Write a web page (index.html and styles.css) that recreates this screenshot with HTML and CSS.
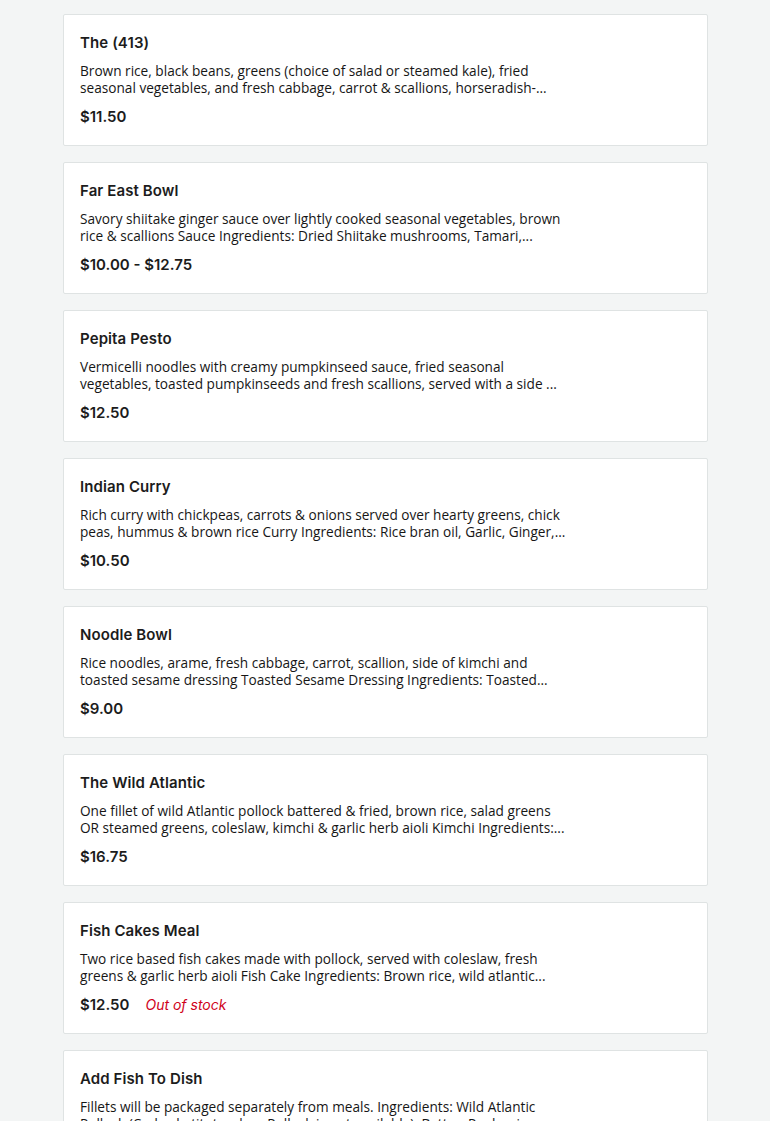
FILE: index.html
```
<!DOCTYPE html>
<html>
<head>
<meta charset="utf-8">
<link rel="stylesheet" href="styles.css">
</head>
<body>
<main class="menu">
  <article class="card">
    <h3 class="title">The (413)</h3>
    <p class="desc">Brown rice, black beans, greens (choice of salad or steamed kale), fried<br>seasonal vegetables, and fresh cabbage, carrot &amp; scallions, horseradish-...</p>
    <div class="meta"><span class="price">$11.50</span></div>
  </article>
  <article class="card">
    <h3 class="title">Far East Bowl</h3>
    <p class="desc">Savory shiitake ginger sauce over lightly cooked seasonal vegetables, brown<br>rice &amp; scallions Sauce Ingredients: Dried Shiitake mushrooms, Tamari,...</p>
    <div class="meta"><span class="price">$10.00 - $12.75</span></div>
  </article>
  <article class="card">
    <h3 class="title">Pepita Pesto</h3>
    <p class="desc">Vermicelli noodles with creamy pumpkinseed sauce, fried seasonal<br>vegetables, toasted pumpkinseeds and fresh scallions, served with a side ...</p>
    <div class="meta"><span class="price">$12.50</span></div>
  </article>
  <article class="card">
    <h3 class="title">Indian Curry</h3>
    <p class="desc">Rich curry with chickpeas, carrots &amp; onions served over hearty greens, chick<br>peas, hummus &amp; brown rice Curry Ingredients: Rice bran oil, Garlic, Ginger,...</p>
    <div class="meta"><span class="price">$10.50</span></div>
  </article>
  <article class="card">
    <h3 class="title">Noodle Bowl</h3>
    <p class="desc">Rice noodles, arame, fresh cabbage, carrot, scallion, side of kimchi and<br>toasted sesame dressing Toasted Sesame Dressing Ingredients: Toasted...</p>
    <div class="meta"><span class="price">$9.00</span></div>
  </article>
  <article class="card">
    <h3 class="title">The Wild Atlantic</h3>
    <p class="desc">One fillet of wild Atlantic pollock battered &amp; fried, brown rice, salad greens<br>OR steamed greens, coleslaw, kimchi &amp; garlic herb aioli Kimchi Ingredients:...</p>
    <div class="meta"><span class="price">$16.75</span></div>
  </article>
  <article class="card">
    <h3 class="title">Fish Cakes Meal</h3>
    <p class="desc">Two rice based fish cakes made with pollock, served with coleslaw, fresh<br>greens &amp; garlic herb aioli Fish Cake Ingredients: Brown rice, wild atlantic...</p>
    <div class="meta"><span class="price">$12.50</span><span class="stock">Out of stock</span></div>
  </article>
  <article class="card">
    <h3 class="title">Add Fish To Dish</h3>
    <p class="desc">Fillets will be packaged separately from meals. Ingredients: Wild Atlantic<br>Pollock (Cod substitute when Pollock is not available), Batter: Panko rice...</p>
    <div class="meta"><span class="price">$5.00</span></div>
  </article>
</main>
</body>
</html>
```
FILE: styles.css
```
html, body {
  margin: 0;
  padding: 0;
  background: #f3f5f5;
}
body {
  color: #1c1c1c;
  font-family: "Open Sans", "Noto Sans", sans-serif;
}
.menu {
  width: 645px;
  margin: 0 auto;
  padding-top: 14px;
  padding-left: 1px;
  display: flex;
  flex-direction: column;
  gap: 16px;
}
.card {
  background: #fff;
  border: 1px solid #dfe3e3;
  border-radius: 2px;
  padding: 17px 16px 18px 16px;
  box-sizing: border-box;
  height: 132px;
}
.title {
  margin: 0;
  font-family: "Inter", "Lato", sans-serif;
  font-weight: 600;
  font-size: 15px;
  line-height: 22px;
  letter-spacing: 0.1px;
}
.desc {
  margin: 8px 0 0 0;
  font-size: 13.65px;
  line-height: 17px;
  white-space: nowrap;
  color: #161616;
}
.meta {
  margin-top: 11px;
  display: flex;
  align-items: baseline;
  gap: 16px;
  line-height: 20px;
}
.price {
  font-family: "Inter", "Lato", sans-serif;
  font-weight: 600;
  font-size: 15px;
}
.stock {
  font-family: "Inter", "Lato", sans-serif;
  font-style: italic;
  font-size: 14px;
  color: #d0021b;
}
```
